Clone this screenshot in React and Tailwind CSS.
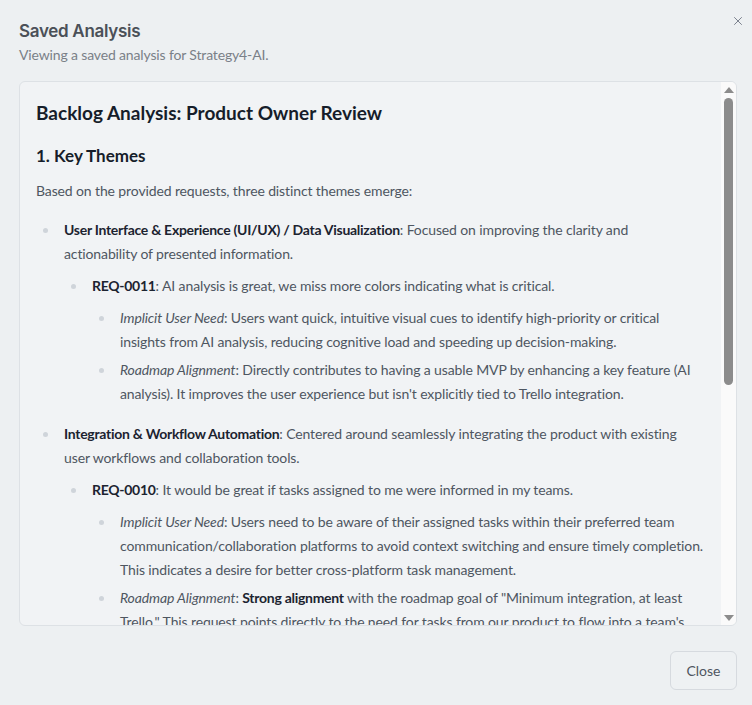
import React from "react";
import { X } from "lucide-react";

const Dot = () => (
  <span className="w-7 shrink-0 flex">
    <span className="ml-[7px] mt-[10px] w-[5px] h-[5px] rounded-full bg-[#cfd4da]" />
  </span>
);

const Li = ({ children, className = "" }) => (
  <li className={"flex " + className}>
    <Dot />
    <div className="flex-1 min-w-0">{children}</div>
  </li>
);

const B = ({ children }) => (
  <strong className="font-bold text-[#1c2330] tracking-[-0.28px]">{children}</strong>
);
const I = ({ children }) => <em className="italic">{children}</em>;

export default function App() {
  return (
    <div
      className="w-[752px] h-[705px] bg-[#edf0f2] flex flex-col pl-[19px] pr-[15px] pt-[19px] pb-[14px] relative"
      style={{ fontFamily: "Lato, 'Noto Sans', sans-serif" }}
    >
      <button className="absolute right-[7px] top-[14px] text-[#6b7280]">
        <X size={14} strokeWidth={1.5} />
      </button>
      <h2
        className="text-[17px] leading-6 font-semibold text-[#4b5058]"
        style={{ fontFamily: "Inter, sans-serif", letterSpacing: "-0.3px" }}
      >
        Saved Analysis
      </h2>
      <p className="text-[14px] leading-5 text-[#7a8088] mt-[2px] tracking-[-0.15px]">
        Viewing a saved analysis for Strategy4-AI.
      </p>
      <div className="mt-[16px] h-[545px] border border-[#dde1e5] rounded-md bg-[#f1f3f5] flex overflow-hidden">
        <div className="flex-1 min-w-0 overflow-hidden">
          <div className="pl-4 pr-[17px] pt-[17px] pb-6 text-[14px] leading-6 text-[#4e5661] tracking-[-0.12px]">
            <h1 className="text-[19px] leading-7 font-bold text-[#161d2a] tracking-normal">
              Backlog Analysis: Product Owner Review
            </h1>
            <h2 className="mt-[15px] text-[17px] leading-7 font-bold text-[#161d2a] tracking-normal">
              1. Key Themes
            </h2>
            <p className="mt-[9px]">Based on the provided requests, three distinct themes emerge:</p>
            <ul className="mt-[15px] flex flex-col gap-4">
              <Li>
                <B>User Interface &amp; Experience (UI/UX) / Data Visualization</B>: Focused on improving the clarity and actionability of presented information.
                <ul className="mt-2">
                  <Li>
                    <B>REQ-0011</B>: AI analysis is great, we miss more colors indicating what is critical.
                    <ul className="mt-2 flex flex-col gap-1">
                      <Li>
                        <I>Implicit User Need</I>: Users want quick, intuitive visual cues to identify high-priority or critical insights from AI analysis, reducing cognitive load and speeding up decision-making.
                      </Li>
                      <Li>
                        <I>Roadmap Alignment</I>: Directly contributes to having a usable MVP by enhancing a key feature (AI analysis). It improves the user experience but isn't explicitly tied to Trello integration.
                      </Li>
                    </ul>
                  </Li>
                </ul>
              </Li>
              <Li>
                <B>Integration &amp; Workflow Automation</B>: Centered around seamlessly integrating the product with existing user workflows and collaboration tools.
                <ul className="mt-2">
                  <Li>
                    <B>REQ-0010</B>: It would be great if tasks assigned to me were informed in my teams.
                    <ul className="mt-2 flex flex-col gap-1">
                      <Li>
                        <I>Implicit User Need</I>: Users need to be aware of their assigned tasks within their preferred team communication/collaboration platforms to avoid context switching and ensure timely completion. This indicates a desire for better cross-platform task management.
                      </Li>
                      <Li>
                        <I>Roadmap Alignment</I>: <B>Strong alignment</B> with the roadmap goal of "Minimum integration, at least Trello." This request points directly to the need for tasks from our product to flow into a team's existing tools, such as Trello or Teams.
                      </Li>
                    </ul>
                  </Li>
                </ul>
              </Li>
              <Li>
                <B>Data Management &amp; Reliability</B>: Concerned with the accuracy and consistency of the information stored in the product.
                <ul className="mt-2">
                  <Li>
                    <B>REQ-0009</B>: Sometimes the imported data is duplicated after syncing.
                    <ul className="mt-2 flex flex-col gap-1">
                      <Li>
                        <I>Implicit User Need</I>: Users need to trust that their data is correct and complete, without manual clean-up after each sync.
                      </Li>
                      <Li>
                        <I>Roadmap Alignment</I>: Supports the MVP goal of a reliable core experience and is a prerequisite for stable integrations.
                      </Li>
                    </ul>
                  </Li>
                </ul>
              </Li>
            </ul>
          </div>
        </div>
        <div className="w-[15px] shrink-0 bg-[#fafafa] flex flex-col items-center">
          <div className="h-[15px] flex items-center justify-center">
            <div className="w-0 h-0 border-l-[5px] border-r-[5px] border-b-[6px] border-l-transparent border-r-transparent border-b-[#8c8c8c]" />
          </div>
          <div className="mt-[1px] w-[9px] h-[287px] rounded-full bg-[#8c8c8c]" />
          <div className="flex-1" />
          <div className="h-[15px] flex items-center justify-center">
            <div className="w-0 h-0 border-l-[5px] border-r-[5px] border-t-[6px] border-l-transparent border-r-transparent border-t-[#8c8c8c]" />
          </div>
        </div>
      </div>
      <div className="flex justify-end mt-[25px]">
        <button className="h-[39px] w-[67px] border border-[#d6dadf] rounded-md bg-[#eef1f3] text-[14px] text-[#4e5661]">
          Close
        </button>
      </div>
    </div>
  );
}
